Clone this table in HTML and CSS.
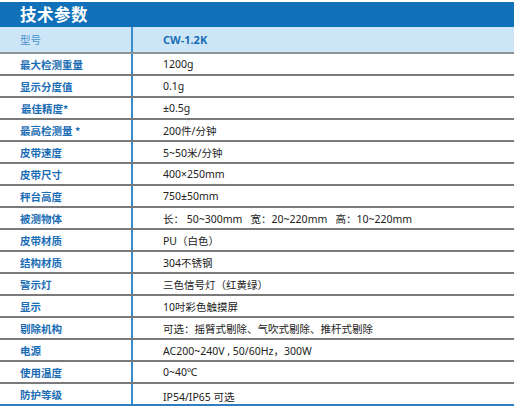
FILE: index.html
```html
<!DOCTYPE html>
<html lang="zh">
<head>
<meta charset="utf-8">
<link rel="stylesheet" href="styles.css">
</head>
<body>
<div class="sheet">
  <div class="title">技术参数</div>
  <div class="spec">
    <div class="row head"><div class="label">型号</div><div class="value">CW-1.2K</div></div>
    <div class="row"><div class="label">最大检测重量</div><div class="value">1200g</div></div>
    <div class="row"><div class="label">显示分度值</div><div class="value">0.1g</div></div>
    <div class="row"><div class="label shift">最佳精度*</div><div class="value">±0.5g</div></div>
    <div class="row"><div class="label">最高检测量 *</div><div class="value">200件/分钟</div></div>
    <div class="row"><div class="label">皮带速度</div><div class="value">5~50米/分钟</div></div>
    <div class="row"><div class="label">皮带尺寸</div><div class="value">400×250mm</div></div>
    <div class="row"><div class="label">秤台高度</div><div class="value">750±50mm</div></div>
    <div class="row"><div class="label">被测物体</div><div class="value">长：&nbsp;50~300mm&nbsp;&nbsp;&nbsp;宽：20~220mm&nbsp;&nbsp;&nbsp;高：10~220mm</div></div>
    <div class="row"><div class="label">皮带材质</div><div class="value">PU（白色）</div></div>
    <div class="row"><div class="label">结构材质</div><div class="value">304不锈钢</div></div>
    <div class="row"><div class="label">警示灯</div><div class="value">三色信号灯（红黄绿）</div></div>
    <div class="row"><div class="label">显示</div><div class="value">10吋彩色触摸屏</div></div>
    <div class="row"><div class="label">剔除机构</div><div class="value">可选：摇臂式剔除、气吹式剔除、推杆式剔除</div></div>
    <div class="row"><div class="label">电源</div><div class="value">AC200~240V , 50/60Hz，300W</div></div>
    <div class="row"><div class="label">使用温度</div><div class="value">0~40℃</div></div>
    <div class="row last"><div class="label">防护等级</div><div class="value low">IP54/IP65 可选</div></div>
  </div>
</div>
</body>
</html>
```
FILE: styles.css
```css
html, body {
  margin: 0;
  padding: 0;
  background: #ffffff;
}
body {
  font-family: "Noto Sans", "Noto Sans CJK SC", sans-serif;
}
.sheet {
  width: 514px;
  padding-top: 2px;
}
.title {
  height: 25px;
  line-height: 25px;
  background: #1071b8;
  color: #ffffff;
  font-family: "Noto Sans CJK SC", sans-serif;
  font-weight: 700;
  font-size: 16.5px;
  padding-left: 20px;
  letter-spacing: 0.5px;
}
.spec {
  display: flex;
  flex-direction: column;
}
.row {
  display: grid;
  grid-template-columns: 131px 1fr;
  height: 20px;
  border-bottom: 2px solid #7a7a7a;
}
.row.head {
  height: 25px;
  background: #cce6f7;
  border-bottom-color: #8c9399;
}
.row.last {
  border-bottom-color: #2f7fc0;
}
.label {
  padding-left: 20px;
  display: flex;
  align-items: center;
  color: #1a6db4;
  font-family: "Noto Sans CJK SC", sans-serif;
  font-weight: 700;
  font-size: 10.5px;
}
.label.shift {
  padding-left: 21px;
}
.head .label {
  color: #4a92cb;
  font-weight: 400;
}
.value {
  border-left: 2px solid #3a8bcb;
  padding-left: 30px;
  display: flex;
  align-items: center;
  color: #222222;
  font-size: 10.5px;
  white-space: nowrap;
}
.head .value {
  color: #1a6db4;
  font-weight: 700;
  font-size: 11px;
}
.value.low {
  padding-top: 4px;
}
```
